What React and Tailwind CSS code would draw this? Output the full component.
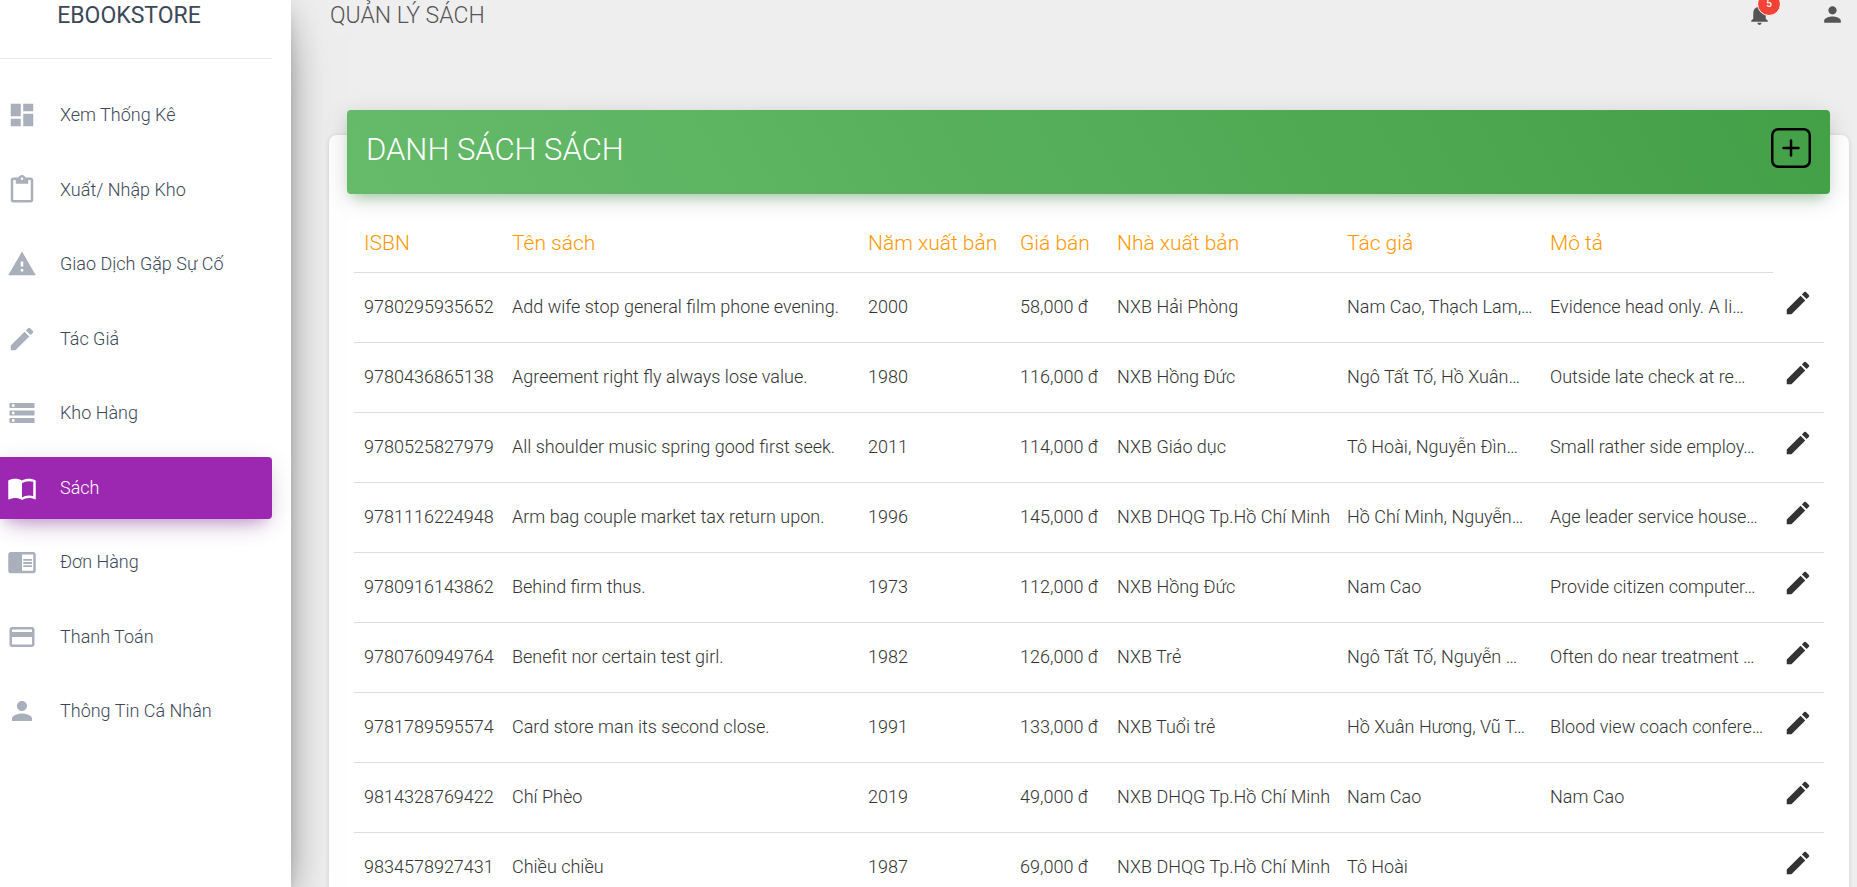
import {
  MdDashboard, MdContentPaste, MdWarning, MdEdit, MdStorage, MdImportContacts,
  MdChromeReaderMode, MdPayment, MdPerson, MdNotifications,
} from "react-icons/md";

const navItems = [
  { label: "Xem Thống Kê", Icon: MdDashboard },
  { label: "Xuất/ Nhập Kho", Icon: MdContentPaste },
  { label: "Giao Dịch Gặp Sự Cố", Icon: MdWarning },
  { label: "Tác Giả", Icon: MdEdit },
  { label: "Kho Hàng", Icon: MdStorage },
  { label: "Sách", Icon: MdImportContacts, active: true },
  { label: "Đơn Hàng", Icon: MdChromeReaderMode },
  { label: "Thanh Toán", Icon: MdPayment },
  { label: "Thông Tin Cá Nhân", Icon: MdPerson },
];

const columns = [
  { title: "ISBN", width: "w-[148px]" },
  { title: "Tên sách", width: "" },
  { title: "Năm xuất bản", width: "w-[152px]" },
  { title: "Giá bán", width: "w-[97px]" },
  { title: "Nhà xuất bản", width: "w-[230px]" },
  { title: "Tác giả", width: "w-[203px]" },
  { title: "Mô tả", width: "w-[233px]" },
];

const books = [
  ["9780295935652", "Add wife stop general film phone evening.", "2000", "58,000 đ", "NXB Hải Phòng", "Nam Cao, Thạch Lam,…", "Evidence head only. A li…"],
  ["9780436865138", "Agreement right fly always lose value.", "1980", "116,000 đ", "NXB Hồng Đức", "Ngô Tất Tố, Hồ Xuân…", "Outside late check at re…"],
  ["9780525827979", "All shoulder music spring good first seek.", "2011", "114,000 đ", "NXB Giáo dục", "Tô Hoài, Nguyễn Đìn…", "Small rather side employ…"],
  ["9781116224948", "Arm bag couple market tax return upon.", "1996", "145,000 đ", "NXB DHQG Tp.Hồ Chí Minh", "Hồ Chí Minh, Nguyễn…", "Age leader service house…"],
  ["9780916143862", "Behind firm thus.", "1973", "112,000 đ", "NXB Hồng Đức", "Nam Cao", "Provide citizen computer…"],
  ["9780760949764", "Benefit nor certain test girl.", "1982", "126,000 đ", "NXB Trẻ", "Ngô Tất Tố, Nguyễn …", "Often do near treatment …"],
  ["9781789595574", "Card store man its second close.", "1991", "133,000 đ", "NXB Tuổi trẻ", "Hồ Xuân Hương, Vũ T…", "Blood view coach confere…"],
  ["9814328769422", "Chí Phèo", "2019", "49,000 đ", "NXB DHQG Tp.Hồ Chí Minh", "Nam Cao", "Nam Cao"],
  ["9834578927431", "Chiều chiều", "1987", "69,000 đ", "NXB DHQG Tp.Hồ Chí Minh", "Tô Hoài", ""],
];

function Sidebar() {
  return (
    <aside className="relative z-10 w-[291px] shrink-0 bg-white pr-[19px] shadow-[0_20px_48px_-15px_rgba(0,0,0,0.56),0_5px_31px_0_rgba(0,0,0,0.12),0_10px_13px_-6px_rgba(0,0,0,0.2)]">
      <div className="flex h-[59px] justify-center border-b border-[#e6e6e6] pr-[14px]">
        <a href="#" className="text-[23px] leading-[32px] font-normal text-[#3c4858]">EBOOKSTORE</a>
      </div>
      <nav className="pt-[25px]">
        <ul className="flex h-[658px] flex-col justify-between">
          {navItems.map(({ label, Icon, active }) => (
            <li key={label}>
              <a
                href="#"
                className={
                  active
                    ? "flex h-[62px] items-center gap-[23px] rounded-r bg-[#9c27b0] pl-[7px] text-white shadow-[0_15px_25px_-12px_rgba(156,39,176,0.28),0_5px_25px_0_rgba(0,0,0,0.12),0_9px_10px_-6px_rgba(156,39,176,0.2)]"
                    : "flex h-[62px] items-center gap-[23px] pl-[7px] text-[#3c4858]"
                }
              >
                <Icon size={30} className={active ? "text-white" : "text-[#a9afbb]"} aria-hidden="true" />
                <span>{label}</span>
              </a>
            </li>
          ))}
        </ul>
      </nav>
    </aside>
  );
}

function TopBar() {
  return (
    <header className="flex h-[30px] items-start justify-between pr-1 pl-px">
      <h1 className="text-[23px] leading-[32px] text-[#555]">QUẢN LÝ SÁCH</h1>
      <div className="flex gap-12 pt-[2px] text-[#555]">
        <button type="button" aria-label="Thông báo" className="relative">
          <MdNotifications size={25} />
          <span className="absolute -top-[10px] left-[10px] flex size-[24px] items-center justify-center rounded-full border border-white bg-[#f44336] text-[10px] leading-none font-medium text-white">5</span>
        </button>
        <button type="button" aria-label="Tài khoản">
          <MdPerson size={25} />
        </button>
      </div>
    </header>
  );
}

function BookTable() {
  return (
    <table className="w-full table-fixed border-collapse text-left text-[#333]">
      <thead>
        <tr className="h-[64px]">
          {columns.map(({ title, width }) => (
            <th key={title} className={`border-b border-[#ddd] px-[10px] pt-[6px] text-[21px] font-light whitespace-nowrap text-[#ff9800] ${width}`}>{title}</th>
          ))}
          <th className="w-[51px]" aria-label="Sửa" />
        </tr>
      </thead>
      <tbody>
        {books.map((book) => (
          <tr key={book[0]} className="h-[70px] border-b border-[#ddd]">
            {book.map((value, i) => (
              <td key={i} className="px-[10px] whitespace-nowrap">{value}</td>
            ))}
            <td className="px-[10px] pb-2">
              <button type="button" aria-label="Sửa sách" className="block">
                <MdEdit size={30} />
              </button>
            </td>
          </tr>
        ))}
      </tbody>
    </table>
  );
}

export default function App() {
  return (
    <div className="flex h-screen overflow-hidden bg-[#eee] font-[Roboto,sans-serif] text-[18px] leading-[26px] font-light">
      <Sidebar />
      <main className="min-w-0 flex-1 pr-2 pl-[38px]">
        <TopBar />
        <section className="mt-[105px] flex flex-col rounded-lg bg-white pr-[19px] pb-6 pl-[18px] shadow-[0_1px_5px_0_rgba(0,0,0,0.14)]">
          <div className="-mt-[25px] flex h-[84px] items-start justify-between rounded bg-linear-60 from-[#66bb6a] to-[#43a047] px-[19px] pt-[18px] shadow-[0_5px_25px_0_rgba(0,0,0,0.14),0_9px_12px_-6px_rgba(76,175,80,0.4)]">
            <h2 className="text-[31px] leading-[44px] text-white">DANH SÁCH SÁCH</h2>
            <button type="button" aria-label="Thêm sách" className="text-black">
              <svg className="size-10" viewBox="0 0 40 40" fill="none" stroke="currentColor" strokeWidth="2.5" aria-hidden="true">
                <rect x="1.25" y="1.25" width="37.5" height="37.5" rx="6" />
                <path d="M20 12.5v15M12.5 20h15" strokeLinecap="round" />
              </svg>
            </button>
          </div>
          <div className="pt-[14px] pr-[6px] pl-[7px]">
            <BookTable />
          </div>
        </section>
      </main>
    </div>
  );
}
